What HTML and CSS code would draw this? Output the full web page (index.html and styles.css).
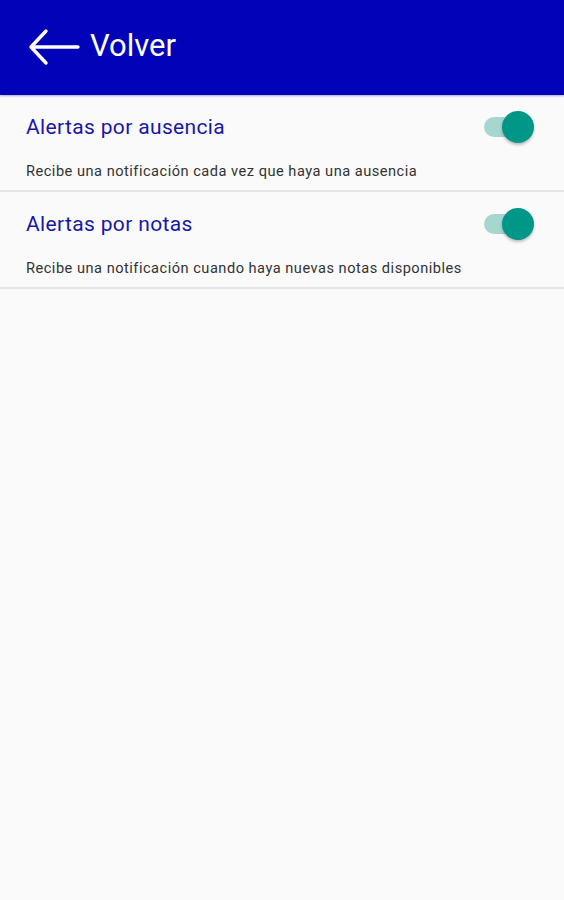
FILE: index.html
```html
<!DOCTYPE html>
<html lang="es">
<head>
<meta charset="utf-8">
<link rel="stylesheet" href="styles.css">
</head>
<body>
<header class="appbar">
  <svg class="back" width="52" height="38" viewBox="0 0 52 38">
    <path d="M50 19 H3 M18 3 L3 19 L18 35" fill="none" stroke="#fff" stroke-width="3.4" stroke-linecap="round" stroke-linejoin="round"/>
  </svg>
  <span class="title">Volver</span>
</header>
<main class="list">
  <section class="item">
    <div class="row">
      <span class="item-title">Alertas por ausencia</span>
      <span class="switch"><span class="track"></span><span class="thumb"></span></span>
    </div>
    <p class="desc">Recibe una notificación cada vez que haya una ausencia</p>
  </section>
  <section class="item">
    <div class="row">
      <span class="item-title">Alertas por notas</span>
      <span class="switch"><span class="track"></span><span class="thumb"></span></span>
    </div>
    <p class="desc">Recibe una notificación cuando haya nuevas notas disponibles</p>
  </section>
</main>
</body>
</html>
```
FILE: styles.css
```css
html, body {
  margin: 0;
  padding: 0;
  background: #fafafa;
  font-family: Roboto, "Noto Sans", sans-serif;
}
body {
  width: 564px;
  height: 900px;
  overflow: hidden;
}
.appbar {
  height: 95px;
  background: #0202b9;
  display: flex;
  align-items: center;
  padding-left: 28px;
  box-sizing: border-box;
  gap: 10px;
  box-shadow: 0 1px 2px rgba(0, 0, 180, 0.35);
}
.back {
  display: block;
  margin-top: -2px;
}
.title {
  color: #fff;
  font-size: 31px;
  font-weight: 400;
  margin-top: -4px;
}
.item {
  padding: 17px 30px 0 26px;
  border-bottom: 2px solid #e4e4e4;
  height: 97px;
  box-sizing: border-box;
}
.row {
  display: flex;
  align-items: center;
  justify-content: space-between;
  height: 30px;
}
.item-title {
  color: #1717a8;
  font-size: 21px;
  letter-spacing: 0.35px;
}
.desc {
  margin: 20px 0 0;
  color: #333;
  font-size: 14.6px;
  line-height: 18px;
  letter-spacing: 0.5px;
}
.switch {
  position: relative;
  width: 50px;
  height: 32px;
  display: block;
}
.track {
  position: absolute;
  left: 0;
  top: 6px;
  width: 46px;
  height: 20px;
  border-radius: 10px;
  background: #a5d6d0;
}
.thumb {
  position: absolute;
  right: 0;
  top: 0;
  width: 32px;
  height: 32px;
  border-radius: 50%;
  background: #009788;
  box-shadow: 0 2px 3px rgba(0, 0, 0, 0.25);
}
```
